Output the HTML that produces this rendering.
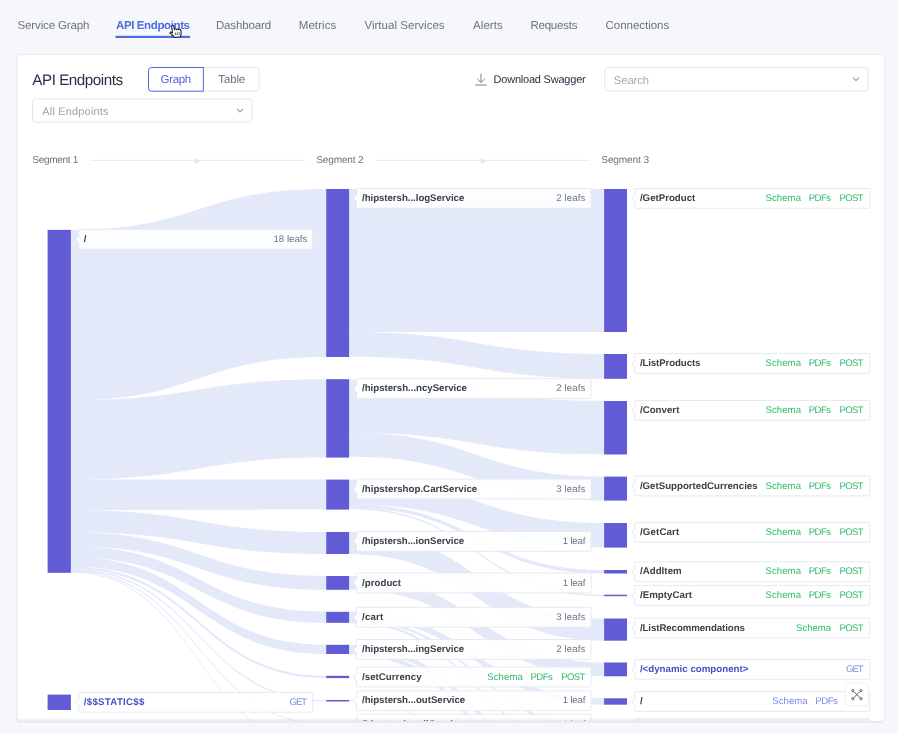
<!DOCTYPE html>
<html><head><meta charset="utf-8"><title>API Endpoints</title>
<style>
html,body{margin:0;padding:0;}
body{width:898px;height:733px;overflow:hidden;background:#f6f7fb;}
svg{display:block;font-family:"Liberation Sans",sans-serif;will-change:transform;}
text{white-space:pre;text-rendering:geometricPrecision;}
</style></head><body>
<svg width="898" height="733" viewBox="0 0 898 733">
<rect width="898" height="733" fill="#f6f7fb"/>
<g>
<text x="17.60" y="28.60" font-size="11.5" fill="#6e7282" textLength="71.70" lengthAdjust="spacing">Service Graph</text>
<text x="116.00" y="28.60" font-size="11.5" fill="#4d6de1" font-weight="700" textLength="74.00" lengthAdjust="spacing">API Endpoints</text>
<text x="215.90" y="28.60" font-size="11.5" fill="#6e7282" textLength="55.30" lengthAdjust="spacing">Dashboard</text>
<text x="298.70" y="28.60" font-size="11.5" fill="#6e7282" textLength="37.60" lengthAdjust="spacing">Metrics</text>
<text x="364.40" y="28.60" font-size="11.5" fill="#6e7282" textLength="80.20" lengthAdjust="spacing">Virtual Services</text>
<text x="473.00" y="28.60" font-size="11.5" fill="#6e7282" textLength="29.80" lengthAdjust="spacing">Alerts</text>
<text x="530.40" y="28.60" font-size="11.5" fill="#6e7282" textLength="47.10" lengthAdjust="spacing">Requests</text>
<text x="605.60" y="28.60" font-size="11.5" fill="#6e7282" textLength="63.60" lengthAdjust="spacing">Connections</text>
</g>
<rect x="115.5" y="35.8" width="74.6" height="2.2" fill="#4d6de1"/>
<rect x="16.9" y="54.5" width="867.6" height="667" rx="3" fill="#fff" stroke="#eceef6"/>
<text x="32.30" y="85.10" font-size="15.2" fill="#2b2f45" textLength="90.70" lengthAdjust="spacing">API Endpoints</text>
<rect x="148.50" y="67.50" width="110.70" height="23.70" rx="3" fill="#fff" stroke="#e3e6f1"/>
<path d="M203.4 67.5 H151.5 Q148.5 67.5 148.5 70.5 V88.2 Q148.5 91.2 151.5 91.2 H203.4 Z" fill="#fff" stroke="#4c68dc"/>
<text x="160.60" y="83.10" font-size="11.5" fill="#5068d8" textLength="30.60" lengthAdjust="spacing">Graph</text>
<text x="218.30" y="83.10" font-size="11.5" fill="#6e7282" textLength="26.90" lengthAdjust="spacing">Table</text>
<rect x="32.50" y="98.90" width="219.70" height="23.20" rx="3" fill="#fff" stroke="#e3e6f1"/>
<text x="42.30" y="114.70" font-size="10.9" fill="#9a9eac" textLength="66.20" lengthAdjust="spacing">All Endpoints</text>
<text x="493.60" y="82.90" font-size="11" fill="#2b2f45" textLength="92.10" lengthAdjust="spacing">Download Swagger</text>
<rect x="604.80" y="67.60" width="263.30" height="23.40" rx="3" fill="#fff" stroke="#e3e6f1"/>
<text x="613.80" y="83.60" font-size="11.2" fill="#a4a8b5" textLength="35.20" lengthAdjust="spacing">Search</text>
<path d="M237 109 L240 112 L243 109" fill="none" stroke="#9a9eac" stroke-width="1.1"/><path d="M853 77.7 L856 80.7 L859 77.7" fill="none" stroke="#9a9eac" stroke-width="1.1"/><path d="M481 73.8 V82.3 M477.2 78.8 L481 82.6 L484.8 78.8 M475.4 85 H486.8" fill="none" stroke="#7c8090" stroke-width="1"/>
<text x="32.30" y="162.80" font-size="10.1" fill="#6e7282" textLength="46.00" lengthAdjust="spacing">Segment 1</text>
<text x="316.30" y="162.80" font-size="10.1" fill="#6e7282" textLength="47.30" lengthAdjust="spacing">Segment 2</text>
<text x="601.30" y="162.80" font-size="10.1" fill="#6e7282" textLength="47.70" lengthAdjust="spacing">Segment 3</text>
<g stroke="#e6e9f7" stroke-width="1" fill="#e6e9f7"><path d="M90 160.4 H305"/><path d="M195 158 L200 161.2 L195 164.2 Z" stroke="none"/><path d="M376 160.4 H590"/><path d="M481 158 L486 161.2 L481 164.2 Z" stroke="none"/></g>
<g stroke="none" fill="rgba(74,110,224,0.15)">
<path d="M70.9 229.90 C198.6 229.90 198.6 189.00 326.2 189.00 L326.2 357.00 C198.6 357.00 198.6 400.08 70.9 400.08 Z"/>
<path d="M70.9 400.08 C198.6 400.08 198.6 379.20 326.2 379.20 L326.2 457.60 C198.6 457.60 198.6 479.50 70.9 479.50 Z"/>
<path d="M70.9 479.50 C198.6 479.50 198.6 479.60 326.2 479.60 L326.2 509.60 C198.6 509.60 198.6 509.89 70.9 509.89 Z"/>
<path d="M70.9 509.89 C198.6 509.89 198.6 532.00 326.2 532.00 L326.2 554.00 C198.6 554.00 198.6 532.18 70.9 532.18 Z"/>
<path d="M70.9 532.18 C198.6 532.18 198.6 576.00 326.2 576.00 L326.2 589.80 C198.6 589.80 198.6 546.16 70.9 546.16 Z"/>
<path d="M70.9 546.16 C198.6 546.16 198.6 611.80 326.2 611.80 L326.2 622.80 C198.6 622.80 198.6 557.30 70.9 557.30 Z"/>
<path d="M70.9 557.30 C198.6 557.30 198.6 644.80 326.2 644.80 L326.2 654.00 C198.6 654.00 198.6 566.62 70.9 566.62 Z"/>
<path d="M70.9 566.62 C198.6 566.62 198.6 675.80 326.2 675.80 L326.2 678.10 C198.6 678.10 198.6 568.95 70.9 568.95 Z"/>
<path d="M70.9 568.95 C198.6 568.95 198.6 700.00 326.2 700.00 L326.2 701.50 C198.6 701.50 198.6 570.47 70.9 570.47 Z"/>
<path d="M70.9 570.47 C198.6 570.47 198.6 723.60 326.2 723.60 L326.2 724.80 C198.6 724.80 198.6 571.69 70.9 571.69 Z"/>
<path d="M70.9 571.69 C198.6 571.69 198.6 747.20 326.2 747.20 L326.2 748.30 C198.6 748.30 198.6 572.80 70.9 572.80 Z"/>
<path d="M349.1 189.00 C476.6 189.00 476.6 189.00 604.1 189.00 L604.1 332.00 C476.6 332.00 476.6 332.00 349.1 332.00 Z"/>
<path d="M349.1 332.00 C476.6 332.00 476.6 354.00 604.1 354.00 L604.1 378.80 C476.6 378.80 476.6 356.80 349.1 356.80 Z"/>
<path d="M349.1 379.20 C476.6 379.20 476.6 401.00 604.1 401.00 L604.1 454.50 C476.6 454.50 476.6 432.70 349.1 432.70 Z"/>
<path d="M349.1 432.70 C476.6 432.70 476.6 476.60 604.1 476.60 L604.1 500.60 C476.6 500.60 476.6 456.70 349.1 456.70 Z"/>
<path d="M349.1 479.60 C476.6 479.60 476.6 523.00 604.1 523.00 L604.1 547.60 C476.6 547.60 476.6 504.20 349.1 504.20 Z"/>
<path d="M349.1 504.20 C476.6 504.20 476.6 570.00 604.1 570.00 L604.1 573.50 C476.6 573.50 476.6 507.70 349.1 507.70 Z"/>
<path d="M349.1 507.70 C476.6 507.70 476.6 594.70 604.1 594.70 L604.1 596.20 C476.6 596.20 476.6 509.20 349.1 509.20 Z"/>
<path d="M349.1 532.00 C476.6 532.00 476.6 618.50 604.1 618.50 L604.1 640.70 C476.6 640.70 476.6 554.20 349.1 554.20 Z"/>
<path d="M349.1 576.00 C476.6 576.00 476.6 662.50 604.1 662.50 L604.1 676.30 C476.6 676.30 476.6 589.80 349.1 589.80 Z"/>
<path d="M349.1 611.80 C476.6 611.80 476.6 698.30 604.1 698.30 L604.1 704.70 C476.6 704.70 476.6 618.20 349.1 618.20 Z"/>
<path d="M349.1 618.20 C476.6 618.20 476.6 727.50 604.1 727.50 L604.1 730.00 C476.6 730.00 476.6 620.70 349.1 620.70 Z"/>
<path d="M349.1 620.70 C476.6 620.70 476.6 751.00 604.1 751.00 L604.1 753.50 C476.6 753.50 476.6 623.20 349.1 623.20 Z"/>
<path d="M349.1 644.80 C476.6 644.80 476.6 772.00 604.1 772.00 L604.1 777.00 C476.6 777.00 476.6 649.80 349.1 649.80 Z"/>
<path d="M349.1 649.80 C476.6 649.80 476.6 797.00 604.1 797.00 L604.1 801.60 C476.6 801.60 476.6 654.40 349.1 654.40 Z"/>
<path d="M349.1 700.00 C476.6 700.00 476.6 824.00 604.1 824.00 L604.1 825.00 C476.6 825.00 476.6 701.00 349.1 701.00 Z"/>
<path d="M349.1 723.60 C476.6 723.60 476.6 847.50 604.1 847.50 L604.1 848.50 C476.6 848.50 476.6 724.60 349.1 724.60 Z"/>
</g>
<g fill="#615cd6">
<rect x="47.6" y="229.9" width="23.3" height="342.9"/>
<rect x="47.6" y="694.6" width="23.3" height="15.4"/>
<rect x="326.2" y="189" width="22.9" height="168.0"/>
<rect x="326.2" y="379.2" width="22.9" height="78.4"/>
<rect x="326.2" y="479.6" width="22.9" height="30.0"/>
<rect x="326.2" y="532" width="22.9" height="22.0"/>
<rect x="326.2" y="576" width="22.9" height="13.8"/>
<rect x="326.2" y="611.8" width="22.9" height="11.0"/>
<rect x="326.2" y="644.8" width="22.9" height="9.2"/>
<rect x="326.2" y="675.8" width="22.9" height="2.3"/>
<rect x="326.2" y="700" width="22.9" height="1.5"/>
<rect x="326.2" y="723.6" width="22.9" height="1.2"/>
<rect x="604.1" y="189" width="22.9" height="143.0"/>
<rect x="604.1" y="354" width="22.9" height="24.8"/>
<rect x="604.1" y="401" width="22.9" height="53.5"/>
<rect x="604.1" y="476.6" width="22.9" height="24.0"/>
<rect x="604.1" y="523" width="22.9" height="24.6"/>
<rect x="604.1" y="570" width="22.9" height="3.5"/>
<rect x="604.1" y="594.7" width="22.9" height="1.5"/>
<rect x="604.1" y="618.5" width="22.9" height="22.2"/>
<rect x="604.1" y="662.5" width="22.9" height="13.8"/>
<rect x="604.1" y="698.3" width="22.9" height="6.4"/>
<rect x="604.1" y="727.5" width="22.9" height="2.5"/>
</g>
<g>
<rect x="78.70" y="229.40" width="234.0" height="19.8" rx="1" fill="rgba(255,255,255,0.88)" stroke="rgba(232,233,239,0.95)"/><path d="M78.80 235.90 L75.60 239.30 L78.80 242.70" fill="rgba(255,255,255,0.96)" stroke="rgba(226,227,235,0.95)" stroke-width="0.9"/><path d="M78.75 236.40 V242.20" fill="none" stroke="#fff" stroke-width="1.2"/>
<text x="83.80" y="241.95" font-size="9.7" fill="#3e4049" font-weight="700" textLength="3.30" lengthAdjust="spacing">/</text>
<text x="273.50" y="241.95" font-size="9.6" fill="#6e7282" textLength="33.70" lengthAdjust="spacing">18 leafs</text>
<rect x="78.70" y="692.40" width="234.0" height="19.8" rx="1" fill="rgba(255,255,255,0.88)" stroke="rgba(232,233,239,0.95)"/><path d="M78.80 698.90 L75.60 702.30 L78.80 705.70" fill="rgba(255,255,255,0.96)" stroke="rgba(226,227,235,0.95)" stroke-width="0.9"/><path d="M78.75 699.40 V705.20" fill="none" stroke="#fff" stroke-width="1.2"/>
<text x="83.80" y="704.95" font-size="9.7" fill="#4a4ec7" font-weight="700" textLength="60.60" lengthAdjust="spacing">/$$STATIC$$</text>
<text x="289.60" y="704.95" font-size="9.6" fill="#7b8de3" textLength="17.60" lengthAdjust="spacing">GET</text>
<rect x="356.50" y="188.50" width="234.6" height="19.8" rx="1" fill="rgba(255,255,255,0.88)" stroke="rgba(232,233,239,0.95)"/><path d="M356.60 195.00 L353.40 198.40 L356.60 201.80" fill="rgba(255,255,255,0.96)" stroke="rgba(226,227,235,0.95)" stroke-width="0.9"/><path d="M356.55 195.50 V201.30" fill="none" stroke="#fff" stroke-width="1.2"/>
<text x="362.00" y="201.05" font-size="9.7" fill="#3e4049" font-weight="700" textLength="102.30" lengthAdjust="spacing">/hipstersh...logService</text>
<text x="556.30" y="201.05" font-size="9.6" fill="#6e7282" textLength="29.10" lengthAdjust="spacing">2 leafs</text>
<rect x="356.50" y="378.70" width="234.6" height="19.8" rx="1" fill="rgba(255,255,255,0.88)" stroke="rgba(232,233,239,0.95)"/><path d="M356.60 385.20 L353.40 388.60 L356.60 392.00" fill="rgba(255,255,255,0.96)" stroke="rgba(226,227,235,0.95)" stroke-width="0.9"/><path d="M356.55 385.70 V391.50" fill="none" stroke="#fff" stroke-width="1.2"/>
<text x="362.00" y="391.25" font-size="9.7" fill="#3e4049" font-weight="700" textLength="105.00" lengthAdjust="spacing">/hipstersh...ncyService</text>
<text x="556.30" y="391.25" font-size="9.6" fill="#6e7282" textLength="29.10" lengthAdjust="spacing">2 leafs</text>
<rect x="356.50" y="479.10" width="234.6" height="19.8" rx="1" fill="rgba(255,255,255,0.88)" stroke="rgba(232,233,239,0.95)"/><path d="M356.60 485.60 L353.40 489.00 L356.60 492.40" fill="rgba(255,255,255,0.96)" stroke="rgba(226,227,235,0.95)" stroke-width="0.9"/><path d="M356.55 486.10 V491.90" fill="none" stroke="#fff" stroke-width="1.2"/>
<text x="362.00" y="491.65" font-size="9.7" fill="#3e4049" font-weight="700" textLength="115.20" lengthAdjust="spacing">/hipstershop.CartService</text>
<text x="556.30" y="491.65" font-size="9.6" fill="#6e7282" textLength="29.10" lengthAdjust="spacing">3 leafs</text>
<rect x="356.50" y="531.50" width="234.6" height="19.8" rx="1" fill="rgba(255,255,255,0.88)" stroke="rgba(232,233,239,0.95)"/><path d="M356.60 538.00 L353.40 541.40 L356.60 544.80" fill="rgba(255,255,255,0.96)" stroke="rgba(226,227,235,0.95)" stroke-width="0.9"/><path d="M356.55 538.50 V544.30" fill="none" stroke="#fff" stroke-width="1.2"/>
<text x="362.00" y="544.05" font-size="9.7" fill="#3e4049" font-weight="700" textLength="102.10" lengthAdjust="spacing">/hipstersh...ionService</text>
<text x="562.70" y="544.05" font-size="9.6" fill="#6e7282" textLength="22.70" lengthAdjust="spacing">1 leaf</text>
<rect x="356.50" y="573.00" width="234.6" height="19.8" rx="1" fill="rgba(255,255,255,0.88)" stroke="rgba(232,233,239,0.95)"/><path d="M356.60 579.50 L353.40 582.90 L356.60 586.30" fill="rgba(255,255,255,0.96)" stroke="rgba(226,227,235,0.95)" stroke-width="0.9"/><path d="M356.55 580.00 V585.80" fill="none" stroke="#fff" stroke-width="1.2"/>
<text x="362.00" y="585.55" font-size="9.7" fill="#3e4049" font-weight="700" textLength="39.00" lengthAdjust="spacing">/product</text>
<text x="562.70" y="585.55" font-size="9.6" fill="#6e7282" textLength="22.70" lengthAdjust="spacing">1 leaf</text>
<rect x="356.50" y="607.40" width="234.6" height="19.8" rx="1" fill="rgba(255,255,255,0.88)" stroke="rgba(232,233,239,0.95)"/><path d="M356.60 613.90 L353.40 617.30 L356.60 620.70" fill="rgba(255,255,255,0.96)" stroke="rgba(226,227,235,0.95)" stroke-width="0.9"/><path d="M356.55 614.40 V620.20" fill="none" stroke="#fff" stroke-width="1.2"/>
<text x="362.00" y="619.95" font-size="9.7" fill="#3e4049" font-weight="700" textLength="21.30" lengthAdjust="spacing">/cart</text>
<text x="556.30" y="619.95" font-size="9.6" fill="#6e7282" textLength="29.10" lengthAdjust="spacing">3 leafs</text>
<rect x="356.50" y="639.50" width="234.6" height="19.8" rx="1" fill="rgba(255,255,255,0.88)" stroke="rgba(232,233,239,0.95)"/><path d="M356.60 646.00 L353.40 649.40 L356.60 652.80" fill="rgba(255,255,255,0.96)" stroke="rgba(226,227,235,0.95)" stroke-width="0.9"/><path d="M356.55 646.50 V652.30" fill="none" stroke="#fff" stroke-width="1.2"/>
<text x="362.00" y="652.05" font-size="9.7" fill="#3e4049" font-weight="700" textLength="102.10" lengthAdjust="spacing">/hipstersh...ingService</text>
<text x="556.30" y="652.05" font-size="9.6" fill="#6e7282" textLength="29.10" lengthAdjust="spacing">2 leafs</text>
<rect x="356.50" y="667.05" width="234.6" height="19.8" rx="1" fill="rgba(255,255,255,0.88)" stroke="rgba(232,233,239,0.95)"/><path d="M356.60 673.55 L353.40 676.95 L356.60 680.35" fill="rgba(255,255,255,0.96)" stroke="rgba(226,227,235,0.95)" stroke-width="0.9"/><path d="M356.55 674.05 V679.85" fill="none" stroke="#fff" stroke-width="1.2"/>
<text x="362.00" y="679.60" font-size="9.7" fill="#3e4049" font-weight="700" textLength="59.60" lengthAdjust="spacing">/setCurrency</text>
<text x="487.30" y="679.60" font-size="9.6" fill="#2ebd6b" textLength="35.50" lengthAdjust="spacing">Schema</text>
<text x="530.50" y="679.60" font-size="9.6" fill="#2ebd6b" textLength="22.30" lengthAdjust="spacing">PDFs</text>
<text x="561.30" y="679.60" font-size="9.6" fill="#2ebd6b" textLength="24.10" lengthAdjust="spacing">POST</text>
<rect x="356.50" y="690.85" width="234.6" height="19.8" rx="1" fill="rgba(255,255,255,0.88)" stroke="rgba(232,233,239,0.95)"/><path d="M356.60 697.35 L353.40 700.75 L356.60 704.15" fill="rgba(255,255,255,0.96)" stroke="rgba(226,227,235,0.95)" stroke-width="0.9"/><path d="M356.55 697.85 V703.65" fill="none" stroke="#fff" stroke-width="1.2"/>
<text x="362.00" y="703.40" font-size="9.7" fill="#3e4049" font-weight="700" textLength="103.20" lengthAdjust="spacing">/hipstersh...outService</text>
<text x="562.70" y="703.40" font-size="9.6" fill="#6e7282" textLength="22.70" lengthAdjust="spacing">1 leaf</text>
<rect x="356.50" y="714.30" width="234.6" height="19.8" rx="1" fill="rgba(255,255,255,0.88)" stroke="rgba(232,233,239,0.95)"/><path d="M356.60 720.80 L353.40 724.20 L356.60 727.60" fill="rgba(255,255,255,0.96)" stroke="rgba(226,227,235,0.95)" stroke-width="0.9"/><path d="M356.55 721.30 V727.10" fill="none" stroke="#fff" stroke-width="1.2"/>
<text x="362.00" y="726.85" font-size="9.7" fill="#3e4049" font-weight="700" textLength="102.00" lengthAdjust="spacing">/hipstersh...ailService</text>
<text x="562.70" y="726.85" font-size="9.6" fill="#6e7282" textLength="22.70" lengthAdjust="spacing">1 leaf</text>
<rect x="634.90" y="188.50" width="234.9" height="19.8" rx="1" fill="rgba(255,255,255,0.88)" stroke="rgba(232,233,239,0.95)"/><path d="M635.00 195.00 L631.80 198.40 L635.00 201.80" fill="rgba(255,255,255,0.96)" stroke="rgba(226,227,235,0.95)" stroke-width="0.9"/><path d="M634.95 195.50 V201.30" fill="none" stroke="#fff" stroke-width="1.2"/>
<text x="639.90" y="201.05" font-size="9.7" fill="#3e4049" font-weight="700" textLength="55.40" lengthAdjust="spacing">/GetProduct</text>
<text x="765.50" y="201.05" font-size="9.6" fill="#2ebd6b" textLength="35.50" lengthAdjust="spacing">Schema</text>
<text x="808.70" y="201.05" font-size="9.6" fill="#2ebd6b" textLength="22.30" lengthAdjust="spacing">PDFs</text>
<text x="839.50" y="201.05" font-size="9.6" fill="#2ebd6b" textLength="24.10" lengthAdjust="spacing">POST</text>
<rect x="634.90" y="353.50" width="234.9" height="19.8" rx="1" fill="rgba(255,255,255,0.88)" stroke="rgba(232,233,239,0.95)"/><path d="M635.00 360.00 L631.80 363.40 L635.00 366.80" fill="rgba(255,255,255,0.96)" stroke="rgba(226,227,235,0.95)" stroke-width="0.9"/><path d="M634.95 360.50 V366.30" fill="none" stroke="#fff" stroke-width="1.2"/>
<text x="639.90" y="366.05" font-size="9.7" fill="#3e4049" font-weight="700" textLength="60.50" lengthAdjust="spacing">/ListProducts</text>
<text x="765.50" y="366.05" font-size="9.6" fill="#2ebd6b" textLength="35.50" lengthAdjust="spacing">Schema</text>
<text x="808.70" y="366.05" font-size="9.6" fill="#2ebd6b" textLength="22.30" lengthAdjust="spacing">PDFs</text>
<text x="839.50" y="366.05" font-size="9.6" fill="#2ebd6b" textLength="24.10" lengthAdjust="spacing">POST</text>
<rect x="634.90" y="400.50" width="234.9" height="19.8" rx="1" fill="rgba(255,255,255,0.88)" stroke="rgba(232,233,239,0.95)"/><path d="M635.00 407.00 L631.80 410.40 L635.00 413.80" fill="rgba(255,255,255,0.96)" stroke="rgba(226,227,235,0.95)" stroke-width="0.9"/><path d="M634.95 407.50 V413.30" fill="none" stroke="#fff" stroke-width="1.2"/>
<text x="639.90" y="413.05" font-size="9.7" fill="#3e4049" font-weight="700" textLength="39.50" lengthAdjust="spacing">/Convert</text>
<text x="765.50" y="413.05" font-size="9.6" fill="#2ebd6b" textLength="35.50" lengthAdjust="spacing">Schema</text>
<text x="808.70" y="413.05" font-size="9.6" fill="#2ebd6b" textLength="22.30" lengthAdjust="spacing">PDFs</text>
<text x="839.50" y="413.05" font-size="9.6" fill="#2ebd6b" textLength="24.10" lengthAdjust="spacing">POST</text>
<rect x="634.90" y="476.10" width="234.9" height="19.8" rx="1" fill="rgba(255,255,255,0.88)" stroke="rgba(232,233,239,0.95)"/><path d="M635.00 482.60 L631.80 486.00 L635.00 489.40" fill="rgba(255,255,255,0.96)" stroke="rgba(226,227,235,0.95)" stroke-width="0.9"/><path d="M634.95 483.10 V488.90" fill="none" stroke="#fff" stroke-width="1.2"/>
<text x="639.90" y="488.65" font-size="9.7" fill="#3e4049" font-weight="700" textLength="117.70" lengthAdjust="spacing">/GetSupportedCurrencies</text>
<text x="765.50" y="488.65" font-size="9.6" fill="#2ebd6b" textLength="35.50" lengthAdjust="spacing">Schema</text>
<text x="808.70" y="488.65" font-size="9.6" fill="#2ebd6b" textLength="22.30" lengthAdjust="spacing">PDFs</text>
<text x="839.50" y="488.65" font-size="9.6" fill="#2ebd6b" textLength="24.10" lengthAdjust="spacing">POST</text>
<rect x="634.90" y="522.50" width="234.9" height="19.8" rx="1" fill="rgba(255,255,255,0.88)" stroke="rgba(232,233,239,0.95)"/><path d="M635.00 529.00 L631.80 532.40 L635.00 535.80" fill="rgba(255,255,255,0.96)" stroke="rgba(226,227,235,0.95)" stroke-width="0.9"/><path d="M634.95 529.50 V535.30" fill="none" stroke="#fff" stroke-width="1.2"/>
<text x="639.90" y="535.05" font-size="9.7" fill="#3e4049" font-weight="700" textLength="39.40" lengthAdjust="spacing">/GetCart</text>
<text x="765.50" y="535.05" font-size="9.6" fill="#2ebd6b" textLength="35.50" lengthAdjust="spacing">Schema</text>
<text x="808.70" y="535.05" font-size="9.6" fill="#2ebd6b" textLength="22.30" lengthAdjust="spacing">PDFs</text>
<text x="839.50" y="535.05" font-size="9.6" fill="#2ebd6b" textLength="24.10" lengthAdjust="spacing">POST</text>
<rect x="634.90" y="561.85" width="234.9" height="19.8" rx="1" fill="rgba(255,255,255,0.88)" stroke="rgba(232,233,239,0.95)"/><path d="M635.00 568.35 L631.80 571.75 L635.00 575.15" fill="rgba(255,255,255,0.96)" stroke="rgba(226,227,235,0.95)" stroke-width="0.9"/><path d="M634.95 568.85 V574.65" fill="none" stroke="#fff" stroke-width="1.2"/>
<text x="639.90" y="574.40" font-size="9.7" fill="#3e4049" font-weight="700" textLength="41.80" lengthAdjust="spacing">/AddItem</text>
<text x="765.50" y="574.40" font-size="9.6" fill="#2ebd6b" textLength="35.50" lengthAdjust="spacing">Schema</text>
<text x="808.70" y="574.40" font-size="9.6" fill="#2ebd6b" textLength="22.30" lengthAdjust="spacing">PDFs</text>
<text x="839.50" y="574.40" font-size="9.6" fill="#2ebd6b" textLength="24.10" lengthAdjust="spacing">POST</text>
<rect x="634.90" y="585.55" width="234.9" height="19.8" rx="1" fill="rgba(255,255,255,0.88)" stroke="rgba(232,233,239,0.95)"/><path d="M635.00 592.05 L631.80 595.45 L635.00 598.85" fill="rgba(255,255,255,0.96)" stroke="rgba(226,227,235,0.95)" stroke-width="0.9"/><path d="M634.95 592.55 V598.35" fill="none" stroke="#fff" stroke-width="1.2"/>
<text x="639.90" y="598.10" font-size="9.7" fill="#3e4049" font-weight="700" textLength="52.10" lengthAdjust="spacing">/EmptyCart</text>
<text x="765.50" y="598.10" font-size="9.6" fill="#2ebd6b" textLength="35.50" lengthAdjust="spacing">Schema</text>
<text x="808.70" y="598.10" font-size="9.6" fill="#2ebd6b" textLength="22.30" lengthAdjust="spacing">PDFs</text>
<text x="839.50" y="598.10" font-size="9.6" fill="#2ebd6b" textLength="24.10" lengthAdjust="spacing">POST</text>
<rect x="634.90" y="618.00" width="234.9" height="19.8" rx="1" fill="rgba(255,255,255,0.88)" stroke="rgba(232,233,239,0.95)"/><path d="M635.00 624.50 L631.80 627.90 L635.00 631.30" fill="rgba(255,255,255,0.96)" stroke="rgba(226,227,235,0.95)" stroke-width="0.9"/><path d="M634.95 625.00 V630.80" fill="none" stroke="#fff" stroke-width="1.2"/>
<text x="639.90" y="630.55" font-size="9.7" fill="#3e4049" font-weight="700" textLength="105.00" lengthAdjust="spacing">/ListRecommendations</text>
<text x="796.00" y="630.55" font-size="9.6" fill="#2ebd6b" textLength="35.10" lengthAdjust="spacing">Schema</text>
<text x="839.50" y="630.55" font-size="9.6" fill="#2ebd6b" textLength="24.10" lengthAdjust="spacing">POST</text>
<rect x="634.90" y="659.50" width="234.9" height="19.8" rx="1" fill="rgba(255,255,255,0.88)" stroke="rgba(232,233,239,0.95)"/><path d="M635.00 666.00 L631.80 669.40 L635.00 672.80" fill="rgba(255,255,255,0.96)" stroke="rgba(226,227,235,0.95)" stroke-width="0.9"/><path d="M634.95 666.50 V672.30" fill="none" stroke="#fff" stroke-width="1.2"/>
<text x="639.90" y="672.05" font-size="9.7" fill="#4a4ec7" font-weight="700" textLength="108.50" lengthAdjust="spacing">/&lt;dynamic component&gt;</text>
<text x="846.00" y="672.05" font-size="9.6" fill="#7b8de3" textLength="17.60" lengthAdjust="spacing">GET</text>
<rect x="634.90" y="691.60" width="234.9" height="19.8" rx="1" fill="rgba(255,255,255,0.88)" stroke="rgba(232,233,239,0.95)"/><path d="M635.00 698.10 L631.80 701.50 L635.00 704.90" fill="rgba(255,255,255,0.96)" stroke="rgba(226,227,235,0.95)" stroke-width="0.9"/><path d="M634.95 698.60 V704.40" fill="none" stroke="#fff" stroke-width="1.2"/>
<text x="639.90" y="704.15" font-size="9.7" fill="#3e4049" font-weight="700" textLength="3.30" lengthAdjust="spacing">/</text>
<text x="772.20" y="704.15" font-size="9.6" fill="#7b8de3" textLength="35.50" lengthAdjust="spacing">Schema</text>
<text x="815.20" y="704.15" font-size="9.6" fill="#7b8de3" textLength="22.70" lengthAdjust="spacing">PDFs</text>
<rect x="634.90" y="718.85" width="234.9" height="19.8" rx="1" fill="rgba(255,255,255,0.88)" stroke="rgba(232,233,239,0.95)"/><path d="M635.00 725.35 L631.80 728.75 L635.00 732.15" fill="rgba(255,255,255,0.96)" stroke="rgba(226,227,235,0.95)" stroke-width="0.9"/><path d="M634.95 725.85 V731.65" fill="none" stroke="#fff" stroke-width="1.2"/>
</g>
<defs><linearGradient id="bs" x1="0" y1="0" x2="0" y2="1"><stop offset="0" stop-color="rgb(190,195,215)" stop-opacity="0"/><stop offset="1" stop-color="rgb(190,195,215)" stop-opacity="0.38"/></linearGradient></defs>
<rect x="17" y="717.4" width="852.5" height="4.4" fill="url(#bs)"/>
<rect x="0" y="721.9" width="898" height="12" fill="#f6f7fb"/>
<rect x="16.9" y="54.5" width="867.6" height="667" rx="3" fill="none" stroke="#e9ebf4"/><path d="M18 722.3 H883.5" stroke="rgba(120,130,170,0.10)" stroke-width="1" fill="none"/>
<rect x="845.30" y="683.00" width="23.20" height="22.60" rx="4" fill="#fff" stroke="#edeff5"/>
<g fill="none" stroke="#4a4d5c" stroke-width="0.9"><path d="M853.6 691.3 L860.2 697.9 M860.2 691.3 L853.6 697.9"/><circle cx="852.8" cy="690.6" r="1.1"/><circle cx="861" cy="690.6" r="1.1"/><circle cx="852.8" cy="698.7" r="1.1"/><circle cx="861" cy="698.7" r="1.1"/></g>
<g transform="translate(168.6,25.4) rotate(-7) scale(1.13,1.0)"><path d="M2.6 1.5 C2.6 0.2 4.6 0.2 4.6 1.5 V5 C4.8 4 6.4 4 6.5 5.2 C6.8 4.4 8.2 4.5 8.3 5.6 C8.7 5 10.2 5.1 10.2 6.2 V9 C10.2 10.5 9.5 11.5 9.2 12.7 H4 C3 10.8 1.5 9.3 0.6 8.2 C0 7.3 1 6.4 1.8 7.2 L2.6 8 Z" fill="#fff" stroke="#1c1c22" stroke-width="0.95" stroke-linejoin="round"/><path d="M5.2 8 V10.6 M6.8 8 V10.6 M8.4 8 V10.6" stroke="#1c1c22" stroke-width="0.6" fill="none"/></g>
</svg></body></html>
